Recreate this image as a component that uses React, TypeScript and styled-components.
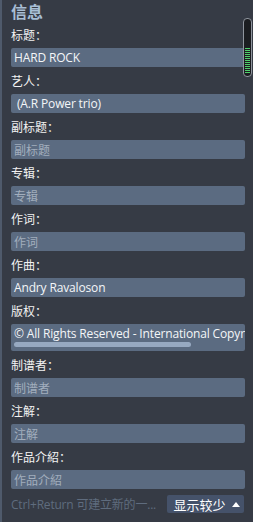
import React from "react";
import styled, { createGlobalStyle } from "styled-components";

const Global = createGlobalStyle`
  html, body { margin: 0; padding: 0; background: #363b45; }
  body { width: 253px; height: 522px; overflow: hidden; }
`;

const Panel = styled.div`
  position: relative;
  box-sizing: border-box;
  width: 253px;
  height: 522px;
  background: #363b45;
  border-left: 2px solid #4f5a6b;
  padding: 0 8px 0 9px;
  font-family: "Open Sans", "Noto Sans CJK SC", sans-serif;
  display: flex;
  flex-direction: column;
`;

const Title = styled.div`
  box-sizing: border-box;
  height: 21px;
  padding-top: 1px;
  line-height: 20px;
  font-size: 16px;
  font-weight: 700;
  color: #a8bed5;
  font-family: "Noto Sans CJK SC", sans-serif;
`;

const Label = styled.div`
  height: 27px;
  display: flex;
  align-items: center;
  font-size: 12px;
  color: #f2f2f2;
  font-family: "Noto Sans CJK SC", sans-serif;
`;

const Field = styled.div<{ $tall?: boolean; $placeholder?: boolean }>`
  box-sizing: border-box;
  height: ${(p) => (p.$tall ? 27 : 19)}px;
  background: #5b6b81;
  border-radius: 2px;
  padding: 0 0 0 3px;
  font-size: 12px;
  line-height: 19px;
  letter-spacing: ${(p) => (p.$placeholder ? "0" : "-0.15px")};
  color: ${(p) => (p.$placeholder ? "#a2aebd" : "#f4f6f8")};
  white-space: pre;
  overflow: hidden;
  position: relative;
  font-family: ${(p) =>
    p.$placeholder ? `"Noto Sans CJK SC", sans-serif` : `"Open Sans", "Noto Sans CJK SC", sans-serif`};
`;

const HScroll = styled.div`
  position: absolute;
  left: 3px;
  top: 18px;
  width: 177px;
  height: 5px;
  border-radius: 3px;
  background: #97a9c1;
`;

const Meter = styled.div`
  position: absolute;
  left: 241px;
  top: 18px;
  width: 7px;
  height: 57px;
  border: 1px solid #8f959e;
  border-radius: 4px;
  background: #1b1d21;
  overflow: hidden;
  &::after {
    content: "";
    position: absolute;
    left: 1px;
    right: 1px;
    bottom: 2px;
    height: 26px;
    background: repeating-linear-gradient(
      to bottom,
      #4fcf6a 0px,
      #4fcf6a 1px,
      #1b1d21 1px,
      #1b1d21 2px
    );
  }
`;

const Footer = styled.div`
  margin-top: 6px;
  height: 18px;
  display: flex;
  align-items: center;
  justify-content: space-between;
`;

const Hint = styled.div`
  font-size: 12px;
  letter-spacing: -0.2px;
  color: #5f6c7e;
  font-family: "Open Sans", "Noto Sans CJK SC", sans-serif;
  white-space: nowrap;
`;

const Button = styled.button`
  box-sizing: border-box;
  width: 77px;
  height: 18px;
  border: none;
  border-radius: 2px;
  background: #45526a;
  color: #ffffff;
  font-size: 13px;
  font-family: "Noto Sans CJK SC", sans-serif;
  padding: 0 0 0 2px;
  display: flex;
  align-items: center;
  justify-content: center;
  gap: 6px;
  margin-right: 1px;
`;

const Caret = styled.svg`
  width: 8px;
  height: 5px;
`;

type F = { label: string; value?: string; placeholder?: string };

const fields1: F[] = [
  { label: "标题：", value: "HARD ROCK" },
  { label: "艺人：", value: " (A.R Power trio)" },
  { label: "副标题：", placeholder: "副标题" },
  { label: "专辑：", placeholder: "专辑" },
  { label: "作词：", placeholder: "作词" },
  { label: "作曲：", value: "Andry Ravaloson" },
];

const fields2: F[] = [
  { label: "制谱者：", placeholder: "制谱者" },
  { label: "注解：", placeholder: "注解" },
  { label: "作品介紹：", placeholder: "作品介紹" },
];

const renderField = (f: F) => (
  <React.Fragment key={f.label}>
    <Label>{f.label}</Label>
    <Field $placeholder={!f.value}>{f.value ?? f.placeholder}</Field>
  </React.Fragment>
);

export default function App() {
  return (
    <>
      <Global />
      <Panel>
        <Title>信息</Title>
        {fields1.map(renderField)}
        <Label>版权：</Label>
        <Field $tall>
          © All Rights Reserved - International Copyright Secured
          <HScroll />
        </Field>
        {fields2.map(renderField)}
        <Footer>
          <Hint>Ctrl+Return 可建立新的一...</Hint>
          <Button>
            显示较少
            <Caret viewBox="0 0 8 5">
              <path d="M0 5 L4 0 L8 5 Z" fill="#ffffff" />
            </Caret>
          </Button>
        </Footer>
        <Meter />
      </Panel>
    </>
  );
}
